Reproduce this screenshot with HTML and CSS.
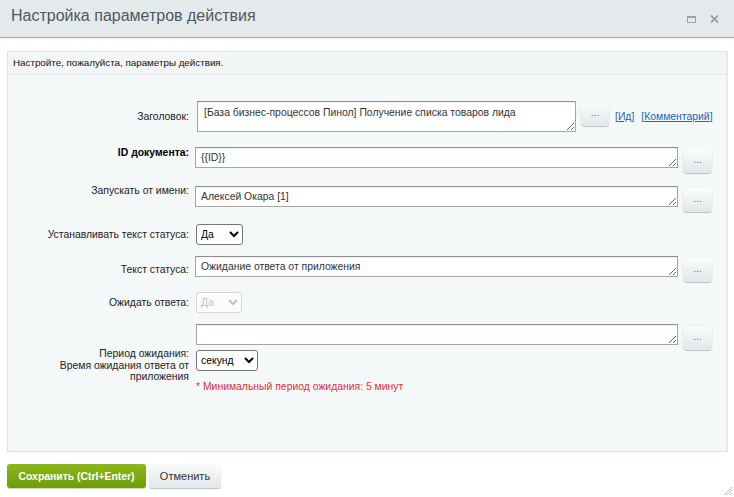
FILE: index.html
```html
<!DOCTYPE html>
<html lang="ru">
<head>
<meta charset="utf-8">
<title>Настройка параметров действия</title>
<link rel="stylesheet" href="styles.css">
</head>
<body>
<div class="dlg">
  <div class="dlg-head">
    <div class="dlg-title">Настройка параметров действия</div>
    <span class="ico-max"></span>
    <svg class="ico-close" width="9" height="8" viewBox="0 0 9 8"><path d="M1 0.5 L8 7.5 M8 0.5 L1 7.5" stroke="#8d959a" stroke-width="1.6"/></svg>
  </div>

  <div class="panel">
    <div class="intro">Настройте, пожалуйста, параметры действия.</div>
    <div class="form">
      <div class="row row-title">
        <div class="lbl lbl-mid">Заголовок:</div>
        <div class="fld fld-title">
          <textarea class="ta ta-title">[База бизнес-процессов Пинол] Получение списка товаров лида</textarea>
          <button class="dots dots-s">...</button>
          <span class="lnk">[<a href="#">Ид</a>]</span>
          <span class="lnk">[<a href="#">Комментарий</a>]</span>
        </div>
      </div>

      <div class="row row-id">
        <div class="lbl lbl-top"><b>ID документа:</b></div>
        <div class="fld">
          <textarea class="ta">{{ID}}</textarea>
          <button class="dots">...</button>
        </div>
      </div>

      <div class="row row-user">
        <div class="lbl lbl-top2">Запускать от имени:</div>
        <div class="fld">
          <textarea class="ta">Алексей Окара [1]</textarea>
          <button class="dots">...</button>
        </div>
      </div>

      <div class="row row-set">
        <div class="lbl lbl-mid">Устанавливать текст статуса:</div>
        <div class="fld">
          <select class="sel sel-yes"><option>Да</option><option>Нет</option></select>
        </div>
      </div>

      <div class="row row-status">
        <div class="lbl lbl-mid">Текст статуса:</div>
        <div class="fld">
          <textarea class="ta">Ожидание ответа от приложения</textarea>
          <button class="dots">...</button>
        </div>
      </div>

      <div class="row row-wait">
        <div class="lbl lbl-mid">Ожидать ответа:</div>
        <div class="fld">
          <select class="sel sel-dis" disabled><option>Да</option></select>
        </div>
      </div>

      <div class="row row-period">
        <div class="lbl lbl-period">Период ожидания:<br>Время ожидания ответа от<br>приложения</div>
        <div class="fld fld-col">
          <div class="fld">
            <textarea class="ta ta-period"></textarea>
            <button class="dots">...</button>
          </div>
          <select class="sel sel-unit"><option>секунд</option><option>минут</option><option>часов</option><option>дней</option></select>
          <div class="note">* Минимальный период ожидания: 5 минут</div>
        </div>
      </div>
    </div>
  </div>

  <div class="foot">
    <button class="btn-save">Сохранить (Ctrl+Enter)</button>
    <button class="btn-cancel">Отменить</button>
  </div>

  <svg class="grip" width="12" height="12" viewBox="0 0 12 12"><path d="M11 3 L3 11 M11 6 L6 11 M11 9 L9 11" stroke="#b5bbbf" stroke-width="1"/></svg>
</div>
</body>
</html>
```

FILE: styles.css
```css
* { box-sizing: border-box; }

body {
  margin: 0;
  background: #fff;
  font-family: "Liberation Sans", Arial, sans-serif;
  color: #000;
}

.dlg {
  position: relative;
  width: 734px;
  height: 497px;
  overflow: hidden;
}

.dlg-head {
  height: 38px;
  background: #e4eaec;
  border-bottom: 1px solid #a7acaf;
  box-shadow: 0 1px 2px rgba(0,0,0,0.08);
  display: flex;
  align-items: center;
  padding: 0 15px 0 11px;
}

.dlg-title {
  flex: 1;
  font-size: 16px;
  color: #4f575f;
  margin-top: -5px;
}

.ico-max {
  width: 9px;
  height: 7px;
  border: 1px solid #9aa2a7;
  border-top-width: 2px;
  margin-right: 14px;
  margin-top: 1px;
}

.ico-close { margin-top: 1px; }

.panel {
  margin: 13px 6px 0 7px;
  border: 1px solid #dbe1e3;
  border-right: 2px solid #e6eaec;
  background: #f5f8f9;
}

.intro {
  height: 23px;
  padding: 0 5px;
  font-size: 9.8px;
  line-height: 22px;
  color: #111;
  background: #f3f6f7;
  border-bottom: 1px solid #e1e7e9;
}

.form {
  height: 376px;
  padding-top: 26px;
  display: flex;
  flex-direction: column;
}

.row {
  display: grid;
  grid-template-columns: 181px 1fr;
  column-gap: 6px;
}

.row-id { margin-top: 15px; }
.row-user { margin-top: 13px; }
.row-set { margin-top: 12px; }
.row-status { margin-top: 11px; }
.row-wait { margin-top: 10px; }
.row-period { margin-top: 11px; }

.lbl {
  font-size: 10.4px;
  line-height: 13px;
  color: #222;
  text-align: right;
}

.lbl b { color: #000; }

.lbl-mid { align-self: center; }
.lbl-top { align-self: start; margin-top: -1px; }
.lbl-top2 { align-self: start; margin-top: -2px; }
.lbl-period { align-self: start; margin-top: 24px; line-height: 11.5px; }

.fld {
  display: flex;
  align-items: flex-start;
}

.fld-col {
  flex-direction: column;
  align-items: flex-start;
}

.fld-title { margin-left: 2px; }

.ta {
  width: 483px;
  height: 21px;
  border: 1px solid #a5a5a5;
  border-top-color: #8e8e8e;
  background: #fff;
  font-family: "Liberation Sans", Arial, sans-serif;
  font-size: 10.4px;
  line-height: 13px;
  color: #333;
  padding: 3px 5px;
  margin: 0;
  resize: both;
  box-shadow: inset 0 1px 1px rgba(0,0,0,0.06);
}

.ta-title {
  width: 379px;
  height: 31px;
  padding: 4px 6px;
}

.ta-period { width: 482px; margin-left: 1px; }

.dots {
  width: 29px;
  height: 24px;
  margin: 2px 0 0 5px;
  border: none;
  border-radius: 4px;
  background: linear-gradient(#fbfcfc, #e1e6e8);
  box-shadow: 0 1px 1px rgba(0,0,0,0.22), 0 0 0 1px rgba(0,0,0,0.02);
  font-family: "Liberation Sans", Arial, sans-serif;
  font-size: 10px;
  color: #6d767c;
  padding: 0 0 4px;
}

.dots-s { width: 28px; height: 23px; }

.lnk {
  font-size: 10.4px;
  color: #2067b0;
  margin: 10px 0 0 6px;
}

.lnk + .lnk { margin-left: 7px; }

.lnk a { color: #2067b0; }

.sel {
  height: 21px;
  font-family: "Liberation Sans", Arial, sans-serif;
  font-size: 10.4px;
  color: #000;
  margin: 0 0 0 1px;
  border: 1px solid #767676;
  border-radius: 3px;
  background: #fff;
}

.sel-yes { width: 47px; }
.sel-dis { width: 46px; color: #aaa; border-color: #c8c8c8; }
.sel-unit { width: 62px; margin-top: 0; }

.note {
  font-size: 10.4px;
  color: #e0313a;
  margin: 10px 0 0 1px;
}

.foot {
  display: flex;
  gap: 3px;
  padding: 12px 0 0 7px;
}

.btn-save {
  width: 139px;
  height: 24px;
  border: none;
  border-radius: 3px;
  background: linear-gradient(#8cb818, #6f9c0c);
  box-shadow: 0 1px 1px rgba(0,0,0,0.2);
  color: #fff;
  font-family: "Liberation Sans", Arial, sans-serif;
  font-size: 10.4px;
  font-weight: bold;
  padding: 0;
}

.btn-cancel {
  width: 72px;
  height: 24px;
  border: none;
  border-radius: 3px;
  background: linear-gradient(#fbfcfc, #e2e7e9);
  box-shadow: 0 1px 1px rgba(0,0,0,0.25);
  color: #333;
  font-family: "Liberation Sans", Arial, sans-serif;
  font-size: 11px;
  padding: 0;
}

.grip {
  position: absolute;
  right: 1px;
  bottom: 1px;
}
```
